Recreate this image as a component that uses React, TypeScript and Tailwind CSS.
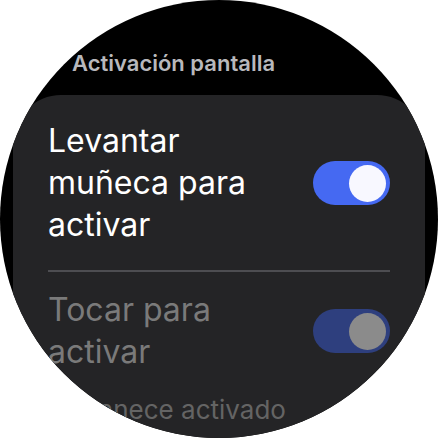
import React from 'react';

const font = { fontFamily: 'Inter, "Noto Sans", sans-serif' };

interface ToggleProps {
  on: boolean;
  dim?: boolean;
}

const Toggle: React.FC<ToggleProps> = ({ dim }) => (
  <div
    className={`flex h-[44px] w-[77px] shrink-0 items-center justify-end rounded-full pr-[4px] ${
      dim ? 'bg-[#2e3f7e]' : 'bg-[#4569f2]'
    }`}
  >
    <div className={`h-[37px] w-[37px] rounded-full ${dim ? 'bg-[#8b8b8b]' : 'bg-[#f8f8ff]'}`} />
  </div>
);

export default function App() {
  return (
    <div className="h-[438px] w-[438px] bg-white" style={font}>
      <div className="flex h-[438px] w-[438px] flex-col overflow-hidden rounded-full bg-black">
        <div className="pl-[72px] pt-[48px] text-[22px] font-semibold leading-[30px] text-[#b8b8bc]">
          Activación pantalla
        </div>
        <div className="mx-[13px] mt-[17px] flex flex-1 flex-col rounded-t-[48px] bg-[#242426] px-[35px] pt-[25px]">
          <div className="flex items-center justify-between">
            <div className="w-[250px] text-[32px] leading-[42px] text-white">
              Levantar muñeca para activar
            </div>
            <Toggle on />
          </div>
          <div className="mt-[24px] h-[2px] bg-[#4d4d51]" />
          <div className="mt-[17px] flex items-center justify-between">
            <div className="w-[250px] text-[32px] leading-[42px] text-[#7a7a7a]">Tocar para activar</div>
            <Toggle on dim />
          </div>
          <div className="-ml-[14px] mt-[20px] text-[26px] leading-[34px] text-[#646464]">Permanece activado</div>
        </div>
      </div>
    </div>
  );
}
